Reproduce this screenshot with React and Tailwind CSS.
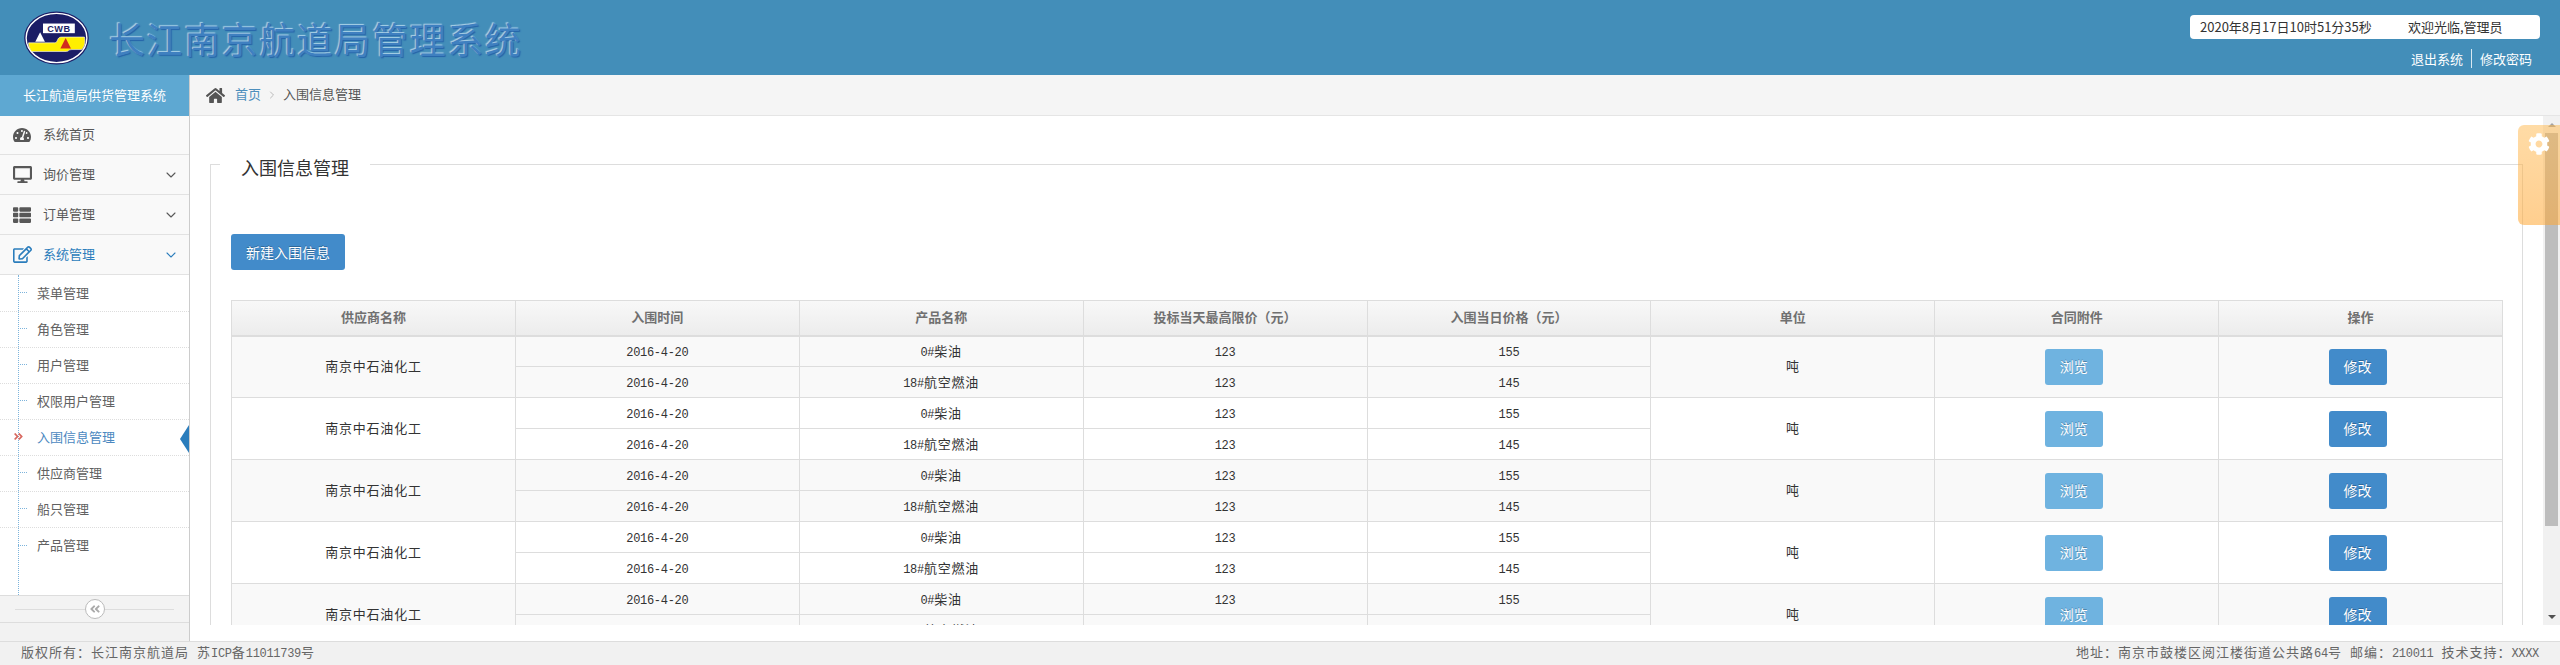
import { ChevronDown, ChevronRight } from 'lucide-react'
import { FaAngleDoubleLeft, FaAngleDoubleRight, FaCog, FaDesktop, FaHome, FaRegEdit, FaTachometerAlt, FaThList } from 'react-icons/fa'

const sans = "font-['Noto_Sans_CJK_SC',sans-serif]"
const mono = "font-['Liberation_Mono',monospace] text-[12px] tracking-[-0.3px]"

const subMenu = ['菜单管理', '角色管理', '用户管理', '权限用户管理', '入围信息管理', '供应商管理', '船只管理', '产品管理']
const headers = ['供应商名称', '入围时间', '产品名称', '投标当天最高限价（元）', '入围当日价格（元）', '单位', '合同附件', '操作']
const groups = [0, 1, 2, 3, 4]

function Logo() {
  return (
    <svg width="67" height="54" viewBox="0 0 68 56" className="shrink-0">
      <ellipse cx="34" cy="28" rx="33.5" ry="27.5" fill="#1b1d66" />
      <ellipse cx="34" cy="28" rx="31.5" ry="25.5" fill="none" stroke="#fff" strokeWidth="1.4" />
      <path d="M5 33 H32 C36 33 34 27 39 27 H63 C64 32 63.5 37 60 40 H50 C46 40 47 42 44 42 H8 C6 39 5 36 5 33 Z" fill="#ffef00" stroke="#fff" strokeWidth="0.6" />
      <polygon points="12,32 22,32 17,22" fill="#fff" />
      <polygon points="38,39 49,39 43.5,28" fill="#d22c1e" />
      <rect x="20" y="13" width="33" height="10" fill="#fff" />
      <text x="36.5" y="21.5" textAnchor="middle" fontSize="9.5" fontWeight="700" fill="#1b1d66" fontFamily="Liberation Sans, sans-serif" letterSpacing="0.5">CWB</text>
    </svg>
  )
}

function NavItem({ icon, label, arrow, active, first }) {
  return (
    <div className={`flex items-center border-b border-[#e2e2e2] bg-[#f9f9f9] ${first ? 'h-[39px]' : 'h-[40px]'} ${active ? 'text-[#2b7dbc]' : 'text-[#585858]'}`}>
      <span className="w-[43px] pl-[13px] shrink-0 flex items-center">{icon}</span>
      <span className="text-[13px] pb-[2px]">{label}</span>
      {arrow && <ChevronDown size={16} strokeWidth={1.6} className="ml-auto mr-[10px]" />}
    </div>
  )
}

function Sidebar() {
  return (
    <aside className="w-[190px] shrink-0 border-r border-[#ccc] bg-[#f2f2f2] flex flex-col">
      <div className="h-[41px] pb-[2px] bg-[#5ea8d2] text-white text-[13px] flex items-center justify-center">长江航道局供货管理系统</div>
      <NavItem first icon={<FaTachometerAlt size={18} />} label="系统首页" />
      <NavItem icon={<FaDesktop size={19} />} label="询价管理" arrow />
      <NavItem icon={<FaThList size={18} />} label="订单管理" arrow />
      <NavItem active icon={<FaRegEdit size={19} />} label="系统管理" arrow />
      <div className="relative h-[320px] shrink-0 bg-white pt-px">
        <div className="absolute left-[18px] top-0 bottom-0 border-l border-dotted border-[#7db4dc]" />
        {subMenu.map((name, i) => {
          const active = name === '入围信息管理'
          return (
            <div key={name} className={`relative h-[36px] pl-[37px] pb-[2px] flex items-center text-[13px] ${i < 7 ? 'border-b border-dotted border-[#ddd]' : ''} ${active ? 'text-[#4b88c0]' : 'text-[#616161]'}`}>
              {active ? (
                <FaAngleDoubleRight size={11} className="absolute left-[13px] text-[#d8685f]" />
              ) : (
                <div className="absolute left-[18px] w-[9px] border-t border-dotted border-[#7db4dc]" />
              )}
              {name}
              {active && <div className="absolute right-0 top-[5px] w-0 h-0 border-y-[14px] border-y-transparent border-r-[9px] border-r-[#2b7dbc]" />}
            </div>
          )
        })}
      </div>
      <div className="relative h-[28px] shrink-0 border-y border-[#ddd] bg-[#f3f3f3] flex items-center justify-center">
        <div className="absolute left-[15px] right-[15px] top-[13px] border-t border-[#ddd]" />
        <span className="relative w-[20px] h-[20px] rounded-full border border-[#bbb] bg-white flex items-center justify-center text-[#aaa]">
          <FaAngleDoubleLeft size={12} />
        </span>
      </div>
    </aside>
  )
}

function Cell({ children, rowSpan, className = '' }) {
  return (
    <td rowSpan={rowSpan} className={`border border-[#ddd] p-0 text-center text-[#333] text-[13px] tracking-[0.8px] ${className}`}>
      {children}
    </td>
  )
}

function Group({ index }) {
  const bg = index % 2 === 0 ? 'bg-[#f9f9f9]' : 'bg-white'
  const span = 2
  return (
    <>
      <tr className={`h-[31px] ${bg}`}>
        <Cell rowSpan={span} className="pb-[2px]">南京中石油化工</Cell>
        <Cell><span className={mono}>2016-4-20</span></Cell>
        <Cell><span className={mono}>0#</span>柴油</Cell>
        <Cell><span className={mono}>123</span></Cell>
        <Cell><span className={mono}>155</span></Cell>
        <Cell rowSpan={span} className="pb-[2px]">吨</Cell>
        <Cell rowSpan={span}>
          <button type="button" className="w-[58px] h-[36px] mr-[6px] rounded-[3px] bg-[#6fb3e0] text-white text-[14px] tracking-normal [text-shadow:0_-1px_0_rgba(0,0,0,0.25)]">浏览</button>
        </Cell>
        <Cell rowSpan={span}>
          <button type="button" className="w-[58px] h-[36px] mr-[6px] rounded-[3px] bg-[#428bca] text-white text-[14px] tracking-normal [text-shadow:0_-1px_0_rgba(0,0,0,0.25)]">修改</button>
        </Cell>
      </tr>
      <tr className={`h-[31px] ${bg}`}>
        <Cell><span className={mono}>2016-4-20</span></Cell>
        <Cell><span className={mono}>18#</span>航空燃油</Cell>
        <Cell><span className={mono}>123</span></Cell>
        <Cell><span className={mono}>145</span></Cell>
      </tr>
    </>
  )
}

export default function App() {
  return (
    <div className={`relative h-screen flex flex-col overflow-hidden bg-white ${sans}`}>
      <header className="h-[75px] shrink-0 bg-[#438eb9] flex items-center pl-[23px] pr-[20px]">
        <Logo />
        <h1 className="ml-[19px] text-[36px] leading-none tracking-[1.6px] text-[#3f80c0] [text-shadow:-1px_-1px_1px_rgba(205,232,248,0.75),1px_1px_1px_rgba(30,90,165,0.8)]">长江南京航道局管理系统</h1>
        <div className="ml-auto w-[350px] self-start mt-[15px] flex flex-col items-end">
          <div className="w-full h-[24px] bg-white rounded-[4px] flex items-center pl-[10px] text-[13px] text-[#333]">
            <span className="w-[208px]">2020年8月17日10时51分35秒</span>
            <span>欢迎光临,管理员</span>
          </div>
          <div className="mt-[10px] pr-[8px] flex items-center text-[13px] text-white leading-none">
            <span>退出系统</span>
            <span className="mx-[8px] h-[19px] border-l border-white/80" />
            <span>修改密码</span>
          </div>
        </div>
      </header>

      <div className="flex-1 min-h-0 flex">
        <Sidebar />
        <main className="flex-1 min-w-0 flex flex-col">
          <div className="h-[41px] shrink-0 bg-[#f5f5f5] border-b border-[#e5e5e5] pl-[16px] flex items-center text-[13px]">
            <FaHome size={19} className="text-[#555]" />
            <span className="ml-[10px] pb-[2px] text-[#4c8fbd]">首页</span>
            <ChevronRight size={12} className="mx-[5px] text-[#bbb]" />
            <span className="pb-[2px] text-[#555]">入围信息管理</span>
          </div>
          <div className="flex h-[509px] shrink-0">
            <div className="flex-1 min-w-0 overflow-hidden pl-[20px] pr-[20px] pt-[36px]">
              <fieldset className="border border-[#ddd] pl-[20px] pr-[19px] pb-[40px]">
                <legend className="-ml-[11px] px-[21px] h-[24px] leading-[30px] text-[18px] text-[#333]">入围信息管理</legend>
                <button type="button" className="block mt-[58px] w-[114px] h-[36px] rounded-[3px] bg-[#428bca] text-white text-[14px] [text-shadow:0_-1px_0_rgba(0,0,0,0.25)]">新建入围信息</button>
                <table className="mt-[30px] w-[2272px] table-fixed border-collapse">
                  <thead>
                    <tr className="h-[35px] bg-gradient-to-b from-[#f8f8f8] to-[#ececec]">
                      {headers.map((h) => (
                        <th key={h} className="border border-[#ddd] border-b-2 p-0 pb-[2px] text-center text-[13px] font-bold text-[#707070]">{h}</th>
                      ))}
                    </tr>
                  </thead>
                  <tbody>
                    {groups.map((g) => <Group key={g} index={g} />)}
                  </tbody>
                </table>
              </fieldset>
            </div>
            <div className="w-[17px] shrink-0 bg-[#f1f1f1] flex flex-col items-center">
              <div className="h-[17px] shrink-0 flex items-center justify-center"><div className="w-0 h-0 border-x-[4px] border-x-transparent border-b-[4px] border-b-[#a3a3a3]" /></div>
              <div className="w-[13px] h-[393px] bg-[#bdbdbd]" />
              <div className="mt-auto h-[17px] shrink-0 flex items-center justify-center"><div className="w-0 h-0 border-x-[4px] border-x-transparent border-t-[4px] border-t-[#505050]" /></div>
            </div>
          </div>
        </main>
      </div>

      <footer className="h-[24px] shrink-0 border-t border-[#ddd] bg-[#f1f1f1] pl-[21px] pr-[21px] pb-[2px] flex items-center justify-between text-[13px] tracking-[1px] text-[#666]">
        <span>版权所有：长江南京航道局<span className="ml-[8px]">苏</span><span className={mono}>ICP</span>备<span className={mono}>11011739</span>号</span>
        <span>地址：南京市鼓楼区阅江楼街道公共路<span className={mono}>64</span>号<span className="ml-[8px]">邮编：</span><span className={mono}>210011</span><span className="ml-[8px]">技术支持：</span><span className={mono}>XXXX</span></span>
      </footer>

      {/* settings tab over the scrollbar */}
      <div className="absolute right-0 top-[125px] w-[42px] h-[100px] rounded-l-[6px] bg-gradient-to-b from-[#ffb84d]/50 to-[#ffa733]/55 pl-[10px] pt-[8px] text-white">
        <FaCog size={22} />
      </div>
    </div>
  )
}
